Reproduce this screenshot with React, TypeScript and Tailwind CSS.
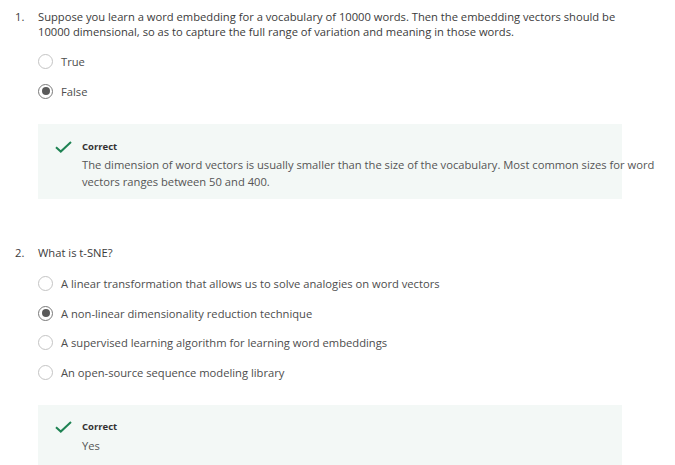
const font = { fontFamily: '"Open Sans", "Noto Sans", sans-serif' };

type Option = { label: string; selected?: boolean };

function Radio({ selected }: { selected?: boolean }) {
  return (
    <span
      className={`flex h-[15px] w-[15px] shrink-0 items-center justify-center rounded-full border bg-white ${
        selected ? 'border-[#7a7a7a]' : 'border-[#c4c4c4]'
      }`}
    >
      {selected && <span className="h-[8px] w-[8px] rounded-full bg-[#5a5a5a]" />}
    </span>
  );
}

function CheckIcon() {
  return (
    <svg width="17" height="12" viewBox="0 0 17 12" className="shrink-0">
      <path d="M1 6.2 L5.8 10.6 L16 1" fill="none" stroke="#1f8354" strokeWidth="2" />
    </svg>
  );
}

function Options({ items, gaps }: { items: Option[]; gaps: string[] }) {
  return (
    <div className="pl-[38px]">
      {items.map((o, i) => (
        <div key={o.label} className={`flex h-4 items-center gap-[8px] ${gaps[i]}`}>
          <Radio selected={o.selected} />
          <span className="text-[11.2px] leading-[15px] text-[#4d4d4d]">{o.label}</span>
        </div>
      ))}
    </div>
  );
}

function Feedback({ children, className }: { children: React.ReactNode; className: string }) {
  return (
    <div className={`ml-[38px] w-[584px] bg-[#f3f8f6] pl-[17px] ${className}`}>
      <div className="flex items-start gap-[10px]">
        <div className="pt-[1px]">
          <CheckIcon />
        </div>
        <div className="w-[600px] shrink-0">
          <div className="text-[9.5px] font-bold leading-[14px] text-[#333333]">Correct</div>
          {children}
        </div>
      </div>
    </div>
  );
}

export default function App() {
  return (
    <div className="h-[465px] w-[675px] overflow-hidden bg-white" style={font}>
      {/* Question 1 */}
      <div className="flex pt-[9px] pl-[15px] text-[11.2px] leading-[15px] text-[#3b3b3b]">
        <span className="w-[23px] shrink-0">1.</span>
        <p className="whitespace-nowrap">
          Suppose you learn a word embedding for a vocabulary of 10000 words. Then the embedding vectors should be
          <br />
          10000 dimensional, so as to capture the full range of variation and meaning in those words.
        </p>
      </div>

      <Options
        items={[{ label: 'True' }, { label: 'False', selected: true }]}
        gaps={['mt-[14px]', 'mt-[14px]']}
      />

      <Feedback className="mt-[25px] h-[75px] pt-[16px]">
        <p className="mt-[2px] whitespace-nowrap text-[11.2px] leading-[17px] text-[#555555]">
          The dimension of word vectors is usually smaller than the size of the vocabulary. Most common sizes for word
          <br />
          vectors ranges between 50 and 400.
        </p>
      </Feedback>

      {/* Question 2 */}
      <div className="mt-[46px] flex pl-[15px] text-[11.2px] leading-[15px] text-[#3b3b3b]">
        <span className="w-[23px] shrink-0">2.</span>
        <p>What is t-SNE?</p>
      </div>

      <Options
        items={[
          { label: 'A linear transformation that allows us to solve analogies on word vectors' },
          { label: 'A non-linear dimensionality reduction technique', selected: true },
          { label: 'A supervised learning algorithm for learning word embeddings' },
          { label: 'An open-source sequence modeling library' },
        ]}
        gaps={['mt-[15px]', 'mt-[14px]', 'mt-[13px]', 'mt-[14px]']}
      />

      <Feedback className="mt-[25px] h-[60px] pt-[15px]">
        <p className="mt-[3px] text-[11.2px] leading-[17px] text-[#555555]">Yes</p>
      </Feedback>
    </div>
  );
}
